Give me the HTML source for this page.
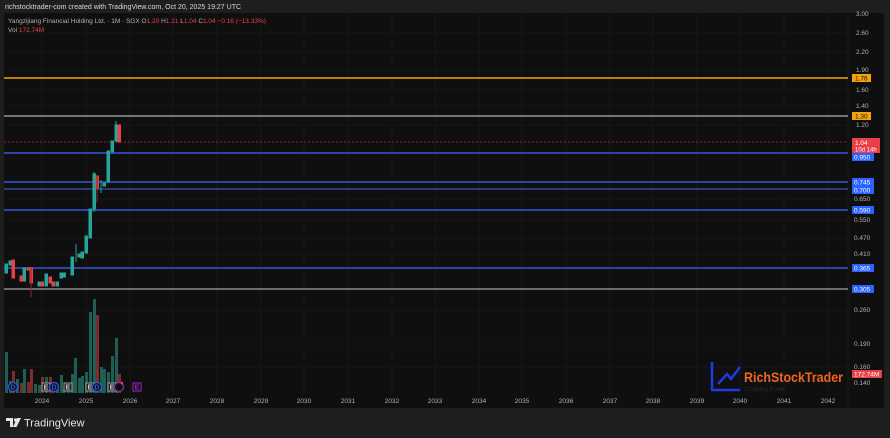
<!DOCTYPE html>
<html><head><meta charset="utf-8"><style>
body{margin:0;width:890px;height:438px;background:#1e1e1e;overflow:hidden;font-family:"Liberation Sans",sans-serif}
svg{position:absolute;left:0;top:0}
</style></head><body>
<svg width="890" height="438" viewBox="0 0 890 438" font-family="Liberation Sans, sans-serif">
<rect x="0" y="0" width="890" height="438" fill="#1e1e1e"/>
<rect x="4" y="13" width="880" height="395" fill="#0f0f0f"/>
<line x1="848" y1="13" x2="848" y2="408" stroke="#1a1a1a"/>
<g stroke="#171717" stroke-width="1">
<line x1="4" y1="33" x2="848" y2="33"/><line x1="4" y1="52" x2="848" y2="52"/><line x1="4" y1="70" x2="848" y2="70"/><line x1="4" y1="90" x2="848" y2="90"/><line x1="4" y1="106" x2="848" y2="106"/><line x1="4" y1="125" x2="848" y2="125"/><line x1="4" y1="199" x2="848" y2="199"/><line x1="4" y1="220" x2="848" y2="220"/><line x1="4" y1="238" x2="848" y2="238"/><line x1="4" y1="254" x2="848" y2="254"/><line x1="4" y1="310" x2="848" y2="310"/><line x1="4" y1="344" x2="848" y2="344"/><line x1="4" y1="367" x2="848" y2="367"/>
<line x1="42" y1="13" x2="42" y2="395"/><line x1="86" y1="13" x2="86" y2="395"/><line x1="130" y1="13" x2="130" y2="395"/><line x1="173" y1="13" x2="173" y2="395"/><line x1="217" y1="13" x2="217" y2="395"/><line x1="261" y1="13" x2="261" y2="395"/><line x1="304" y1="13" x2="304" y2="395"/><line x1="348" y1="13" x2="348" y2="395"/><line x1="392" y1="13" x2="392" y2="395"/><line x1="435" y1="13" x2="435" y2="395"/><line x1="479" y1="13" x2="479" y2="395"/><line x1="522" y1="13" x2="522" y2="395"/><line x1="566" y1="13" x2="566" y2="395"/><line x1="610" y1="13" x2="610" y2="395"/><line x1="653" y1="13" x2="653" y2="395"/><line x1="697" y1="13" x2="697" y2="395"/><line x1="740" y1="13" x2="740" y2="395"/><line x1="784" y1="13" x2="784" y2="395"/><line x1="828" y1="13" x2="828" y2="395"/>
</g>
<g fill="#1f5e55">
<rect x="5" y="352" width="3" height="41"/><rect x="9" y="381" width="3" height="12"/><rect x="16" y="379" width="3" height="14"/><rect x="23" y="369" width="3" height="24"/><rect x="34" y="384" width="3" height="9"/><rect x="38" y="385" width="3" height="8"/><rect x="45" y="377" width="3" height="16"/><rect x="56" y="388" width="3" height="5"/><rect x="60" y="375" width="3" height="18"/><rect x="63" y="389" width="3" height="4"/><rect x="67" y="385" width="3" height="8"/><rect x="71" y="374" width="3" height="19"/><rect x="74" y="358" width="3" height="35"/><rect x="78" y="378" width="3" height="15"/><rect x="81" y="376" width="3" height="17"/><rect x="85" y="372" width="3" height="21"/><rect x="89" y="312" width="3" height="81"/><rect x="93" y="299" width="3" height="94"/><rect x="100" y="367" width="3" height="26"/><rect x="103" y="369" width="3" height="24"/><rect x="107" y="372" width="3" height="21"/><rect x="111" y="356" width="3" height="37"/><rect x="115" y="338" width="3" height="55"/>
</g>
<g fill="#7a2d2f">
<rect x="12" y="371" width="3" height="22"/><rect x="20" y="383" width="3" height="10"/><rect x="27" y="382" width="3" height="11"/><rect x="30" y="369" width="3" height="24"/><rect x="41" y="377" width="3" height="16"/><rect x="49" y="377" width="3" height="16"/><rect x="52" y="386" width="3" height="7"/><rect x="96" y="315" width="3" height="78"/><rect x="118" y="374" width="3" height="19"/>
</g>
<line x1="4" y1="78" x2="848" y2="78" stroke="#f5a30a" stroke-width="1.5"/>
<line x1="4" y1="116" x2="848" y2="116" stroke="#d8d8d8" stroke-width="1"/>
<line x1="4" y1="142" x2="848" y2="142" stroke="#8a2a2a" stroke-dasharray="2 2"/>
<line x1="4" y1="153" x2="848" y2="153" stroke="#2846a8" stroke-width="2"/>
<line x1="4" y1="182" x2="848" y2="182" stroke="#2846a8" stroke-width="2"/>
<line x1="4" y1="189" x2="848" y2="189" stroke="#3a6ae0" stroke-width="1"/>
<line x1="4" y1="210" x2="848" y2="210" stroke="#2846a8" stroke-width="2"/>
<line x1="4" y1="268" x2="848" y2="268" stroke="#2846a8" stroke-width="2"/>
<line x1="4" y1="289" x2="848" y2="289" stroke="#c8c8c8" stroke-width="1"/>
<g stroke-width="1">
<g fill="#26a69a" stroke="#26a69a">
<rect x="5" y="264" width="2.5" height="9"/><rect x="9" y="261" width="2.5" height="4"/><rect x="23" y="268" width="2.5" height="13"/><rect x="38" y="282" width="2.5" height="4"/><rect x="45" y="274" width="2.5" height="12"/><rect x="56" y="282" width="2.5" height="4"/><rect x="60" y="273" width="2.5" height="5"/><rect x="63" y="273" width="2.5" height="4"/><rect x="71" y="257" width="2.5" height="18"/><rect x="78" y="254" width="2.5" height="3"/><rect x="81" y="252" width="2.5" height="6"/><rect x="85" y="236" width="2.5" height="17"/><rect x="89" y="209" width="2.5" height="29"/><rect x="93" y="174" width="2.5" height="35"/><rect x="103" y="183" width="2.5" height="3"/><rect x="107" y="151" width="2.5" height="31"/><rect x="111" y="141" width="2.5" height="11"/><rect x="115" y="125" width="2.5" height="16"/>
<line x1="76" y1="244" x2="76" y2="262"/><line x1="94" y1="172" x2="94" y2="212"/><line x1="101" y1="180" x2="101" y2="193"/><line x1="116" y1="121" x2="116" y2="142"/>
</g>
<g fill="#e8404a" stroke="#e8404a">
<rect x="12" y="260" width="2.5" height="18"/><rect x="20" y="276" width="2.5" height="5"/><rect x="27" y="268" width="2.5" height="2"/><rect x="30" y="268" width="2.5" height="15"/><rect x="41" y="282" width="2.5" height="4"/><rect x="49" y="277" width="2.5" height="6"/><rect x="52" y="282" width="2.5" height="4"/><rect x="96" y="176" width="2.5" height="12"/><rect x="118" y="125" width="2.5" height="17"/>
<line x1="31" y1="268" x2="31" y2="297" stroke="#8a2a2a"/><line x1="97" y1="176" x2="97" y2="203" stroke="#8a2a2a"/>
</g>
</g>
<g font-size="7" text-anchor="middle" font-weight="bold">
<circle cx="13" cy="387" r="4.5" fill="#0f0f0f" stroke="#2e5be8" stroke-width="1.2"/><text x="13" y="389.5" fill="#2e5be8">D</text>
<rect x="42" y="383" width="8" height="8" fill="#222" stroke="#999"/><text x="46" y="389.5" fill="#ccc">E</text>
<circle cx="54" cy="387" r="4.5" fill="#0f0f0f" stroke="#2e5be8" stroke-width="1.2"/><text x="54" y="389.5" fill="#2e5be8">D</text>
<rect x="64" y="383" width="8" height="8" fill="#222" stroke="#999"/><text x="68" y="389.5" fill="#ccc">E</text>
<rect x="86" y="383" width="8" height="8" fill="#222" stroke="#999"/><text x="90" y="389.5" fill="#ccc">E</text>
<circle cx="97" cy="387" r="4.5" fill="#0f0f0f" stroke="#2e5be8" stroke-width="1.2"/><text x="97" y="389.5" fill="#2e5be8">D</text>
<rect x="108" y="383" width="8" height="8" fill="#222" stroke="#999"/><text x="112" y="389.5" fill="#ccc">E</text>
<circle cx="119" cy="387" r="4.5" fill="#0f0f0f" stroke="#8a2fb5" stroke-width="1.2"/><circle cx="122" cy="383" r="1.3" fill="#e8404a"/>
<rect x="133" y="383" width="8" height="8" fill="none" stroke="#a020d0"/><text x="137" y="389.5" fill="#a020d0">E</text>
</g>
<path d="M712 362 V390 H740" fill="none" stroke="#1c3be6" stroke-width="2.5"/>
<path d="M718 384 L727 374 L731 379 L740 367" fill="none" stroke="#1c3be6" stroke-width="2.5"/>
<text x="744" y="382" font-size="14" font-weight="bold" fill="#f0651f" textLength="99" lengthAdjust="spacingAndGlyphs">RichStockTrader</text>
<text x="745" y="391" font-size="6" fill="#2a2a2a">Charting Power</text>
<g font-size="6.5" fill="#b2b2b2" text-anchor="middle">
<text x="42" y="403">2024</text><text x="86" y="403">2025</text><text x="130" y="403">2026</text><text x="173" y="403">2027</text><text x="217" y="403">2028</text><text x="261" y="403">2029</text><text x="304" y="403">2030</text><text x="348" y="403">2031</text><text x="392" y="403">2032</text><text x="435" y="403">2033</text><text x="479" y="403">2034</text><text x="522" y="403">2035</text><text x="566" y="403">2036</text><text x="610" y="403">2037</text><text x="653" y="403">2038</text><text x="697" y="403">2039</text><text x="740" y="403">2040</text><text x="784" y="403">2041</text><text x="828" y="403">2042</text>
</g>
<g font-size="6.5" fill="#b2b2b2">
<text x="856" y="16">3.00</text><text x="856" y="35">2.60</text><text x="856" y="54">2.20</text><text x="856" y="72">1.90</text><text x="856" y="92">1.60</text><text x="856" y="108">1.40</text><text x="856" y="127">1.20</text><text x="854" y="201">0.650</text><text x="854" y="222">0.550</text><text x="854" y="240">0.470</text><text x="854" y="256">0.410</text><text x="854" y="272">0.360</text><text x="854" y="312">0.260</text><text x="854" y="346">0.190</text><text x="854" y="369">0.160</text><text x="854" y="385">0.140</text>
</g>
<rect x="852" y="74" width="19" height="8" fill="#f5a30a"/><text x="855" y="80.5" font-size="6.5" fill="#111">1.76</text>
<rect x="852" y="112" width="19" height="8" fill="#f5a30a"/><text x="855" y="118.5" font-size="6.5" fill="#111">1.30</text>
<rect x="852" y="138" width="28" height="15" fill="#e8404a"/><text x="855" y="145" font-size="6.5" fill="#fff">1.04</text><text x="855" y="151.5" font-size="6" fill="#fff">10d 14h</text>
<rect x="852" y="153" width="22" height="8" fill="#2962ff"/><text x="854" y="159.5" font-size="6.5" fill="#fff">0.950</text>
<rect x="852" y="178" width="22" height="8" fill="#2962ff"/><text x="854" y="184.5" font-size="6.5" fill="#fff">0.745</text>
<rect x="852" y="186" width="22" height="8" fill="#2962ff"/><text x="854" y="192.5" font-size="6.5" fill="#fff">0.700</text>
<rect x="852" y="206" width="22" height="8" fill="#2962ff"/><text x="854" y="212.5" font-size="6.5" fill="#fff">0.590</text>
<rect x="852" y="264" width="22" height="8" fill="#2962ff"/><text x="854" y="270.5" font-size="6.5" fill="#fff">0.365</text>
<rect x="852" y="285" width="22" height="8" fill="#2962ff"/><text x="854" y="291.5" font-size="6.5" fill="#fff">0.305</text>
<rect x="852" y="370" width="30" height="8" fill="#e8404a"/><text x="854" y="376.5" font-size="6.5" fill="#fff">172.74M</text>
<text x="5" y="9" font-size="7" fill="#d8d8d8">richstocktrader-com created with TradingView.com, Oct 20, 2025 19:27 UTC</text>
<text x="8" y="23" font-size="6.5" fill="#b2b2b2">Yangzijiang Financial Holding Ltd. · 1M · SGX  O<tspan fill="#e8404a">1.20</tspan> H<tspan fill="#e8404a">1.21</tspan> L<tspan fill="#e8404a">1.04</tspan> C<tspan fill="#e8404a">1.04  −0.16 (−13.33%)</tspan></text>
<text x="8" y="32" font-size="6.5" fill="#b2b2b2">Vol  <tspan fill="#e8404a">172.74M</tspan></text>
<path d="M6 418 H13 V427 H10 V421 H6 Z" fill="#e6e6e6"/><circle cx="15.5" cy="420" r="1.6" fill="#e6e6e6"/><path d="M17 418 H21 L16.5 427 H13 Z" fill="#e6e6e6"/>
<text x="24" y="426.5" font-size="11" fill="#e6e6e6">TradingView</text>
</svg>
</body></html>
